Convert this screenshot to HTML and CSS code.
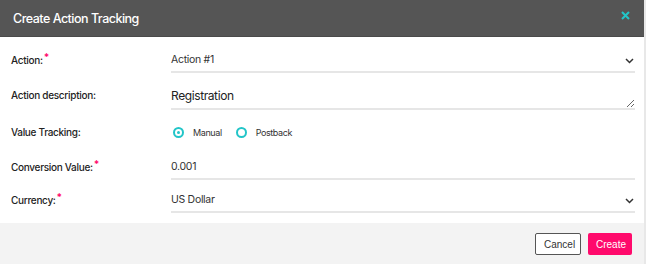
FILE: index.html
```html
<!DOCTYPE html>
<html lang="en">
<head>
    <meta charset="UTF-8">
    <title>Create Action Tracking</title>
    <link rel="stylesheet" href="styles.css">
</head>
<body>
    <div class="modal">
        <div class="modal-header">
            <h1>Create Action Tracking</h1>
            <button class="close" aria-label="Close">
                <svg width="9" height="9" viewBox="0 0 9 9"><path d="M1 1 L8 8 M8 1 L1 8" stroke="#22c5c8" stroke-width="2" fill="none"/></svg>
            </button>
        </div>
        <div class="modal-body">
            <div class="row row-action">
                <label>Action:<span class="req">*</span></label>
                <div class="field select">
                    <span>Action #1</span>
                    <svg class="chevron" width="9" height="6" viewBox="0 0 9 6"><path d="M1 1 L4.5 4.5 L8 1" stroke="#333" stroke-width="1.5" fill="none"/></svg>
                </div>
            </div>
            <div class="row row-desc">
                <label>Action description:</label>
                <textarea class="field textarea">Registration</textarea>
            </div>
            <div class="row row-radio">
                <label>Value Tracking:</label>
                <div class="radios">
                    <span class="radio checked"></span><span class="radio-text">Manual</span>
                    <span class="radio"></span><span class="radio-text">Postback</span>
                </div>
            </div>
            <div class="row row-value">
                <label>Conversion Value:<span class="req">*</span></label>
                <div class="field"><span>0.001</span></div>
            </div>
            <div class="row row-currency">
                <label>Currency:<span class="req">*</span></label>
                <div class="field select">
                    <span>US Dollar</span>
                    <svg class="chevron" width="9" height="6" viewBox="0 0 9 6"><path d="M1 1 L4.5 4.5 L8 1" stroke="#333" stroke-width="1.5" fill="none"/></svg>
                </div>
            </div>
        </div>
        <div class="modal-footer">
            <button class="btn btn-cancel">Cancel</button>
            <button class="btn btn-create">Create</button>
        </div>
    </div>
</body>
</html>
```

FILE: styles.css
```css
body {
    margin: 0;
    font-family: Inter, "Liberation Sans", sans-serif;
    background-color: #e8e8e8;
}
.modal {
    width: 644px;
    height: 264px;
    background-color: white;
    display: flex;
    flex-direction: column;
}
.modal-header {
    height: 36px;
    background-color: #555555;
    border-bottom: 1px solid #4a4a4a;
    display: flex;
    align-items: center;
    justify-content: space-between;
    padding: 0 14px 0 13px;
}
.modal-header h1 {
    margin: 0;
    color: white;
    font-size: 12.5px;
    font-weight: 500;
    letter-spacing: -0.5px;
    margin-top: 1px;
}
.close {
    background: none;
    border: none;
    padding: 0;
    margin-top: -6px;
    display: flex;
}
.modal-body {
    flex: 1;
    padding: 9px 9px 0 11px;
}
.row {
    display: flex;
    align-items: center;
}
.row label {
    width: 160px;
    flex-shrink: 0;
    font-size: 10px;
    font-weight: 500;
    letter-spacing: -0.3px;
    color: #222;
    padding-bottom: 3px;
}
.row-radio label {
    padding-bottom: 1px;
}
.req {
    color: #ff0a6c;
    font-size: 10px;
    font-weight: 700;
    vertical-align: 3px;
    margin-left: 1px;
}
.field {
    flex: 1;
    height: 23px;
    padding-top: 2px;
    border-bottom: 2px solid #e6e6e6;
    display: flex;
    align-items: center;
    justify-content: space-between;
    font-size: 10.5px;
    letter-spacing: -0.3px;
    color: #333;
    box-sizing: content-box;
}
.chevron {
    margin-right: 1px;
    margin-top: 2px;
}
.row-desc {
    margin-top: 10px;
}
.textarea {
    height: 20px;
    border: none;
    border-bottom: 2px solid #e6e6e6;
    padding: 5px 0 0 0;
    font-family: Inter, "Liberation Sans", sans-serif;
    font-size: 12px;
    letter-spacing: -0.4px;
    color: #222;
    resize: vertical;
    outline: none;
    overflow: hidden;
    box-sizing: content-box;
}
.row-radio {
    margin-top: 10px;
    height: 24px;
}
.radios {
    display: flex;
    align-items: center;
    font-size: 9px;
    letter-spacing: -0.4px;
    color: #333;
}
.radio {
    width: 7px;
    height: 7px;
    border: 2px solid #22c5c8;
    border-radius: 50%;
    margin-left: 2px;
    margin-right: 9px;
    position: relative;
}
.radio.checked::after {
    content: "";
    position: absolute;
    left: 2px;
    top: 2px;
    width: 3px;
    height: 3px;
    border-radius: 50%;
    background-color: #22c5c8;
}
.radio-text {
    margin-right: 12px;
}
.row-value {
    margin-top: 9px;
}
.row-currency {
    margin-top: 6px;
}
.modal-footer {
    height: 41px;
    background-color: #f3f3f3;
    display: flex;
    justify-content: flex-end;
    align-items: flex-start;
    padding: 10px 12px 0 0;
    box-sizing: border-box;
    gap: 7px;
}
.btn {
    height: 22px;
    padding: 0 8px;
    font-family: "Liberation Sans", Arial, sans-serif;
    font-size: 10px;
    border-radius: 2px;
    cursor: pointer;
}
.btn-cancel {
    background-color: white;
    border: 1px solid #555;
    color: #333;
    width: 46px;
}
.btn-create {
    background-color: #ff0a6c;
    border: none;
    color: white;
    width: 44px;
}
```
